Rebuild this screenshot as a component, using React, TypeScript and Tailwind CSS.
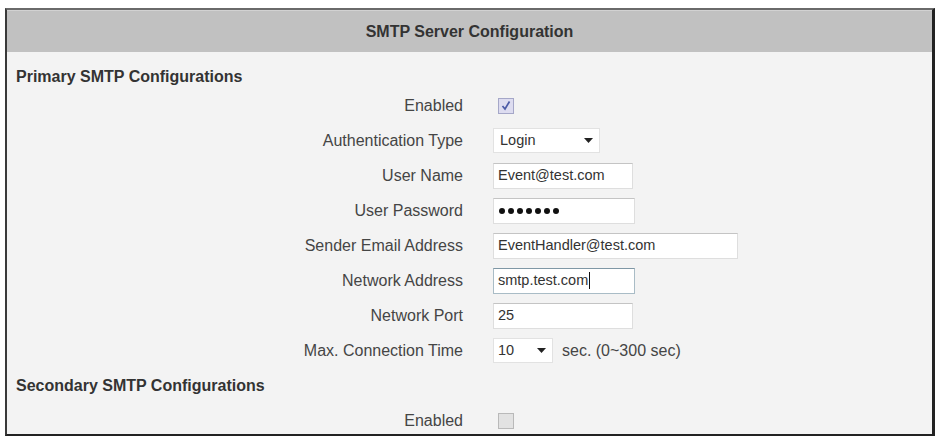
import React from "react";

const font = { fontFamily: '"Liberation Sans", Arial, sans-serif' };

function Row({ label, children }: { label: string; children?: React.ReactNode }) {
  return (
    <div className="flex h-[35px] shrink-0 items-center">
      <div className="w-[456px] shrink-0 pr-0 text-right text-[16px] leading-[18px] text-[#454545]">{label}</div>
      <div className="ml-[30px] flex items-center">{children}</div>
    </div>
  );
}

function TextBox({ w, children, focused }: { w: string; children?: React.ReactNode; focused?: boolean }) {
  return (
    <div
      className={
        "flex h-[26px] items-center border bg-white pl-[4px] text-[14.5px] text-[#333] " +
        w +
        (focused ? " border-[#a9bcc6] border-t-[#7f97a5]" : " border-[#dedede] border-t-[#c4c4c4]")
      }
    >
      {children}
    </div>
  );
}

function Caret() {
  return (
    <svg width="9" height="5" viewBox="0 0 9 5" className="shrink-0">
      <path d="M0 0 H9 L4.5 5 Z" fill="#222" />
    </svg>
  );
}

function Check({ checked }: { checked?: boolean }) {
  return checked ? (
    <div className="ml-[5px] flex h-[16px] w-[16px] items-center justify-center border border-[#a5a7c8] bg-[#dddcf0]">
      <svg width="12" height="11" viewBox="0 0 12 11">
        <path d="M2.5 6 L5 9 L9.5 1.5" fill="none" stroke="#4b5aa6" strokeWidth="1.7" />
      </svg>
    </div>
  ) : (
    <div className="ml-[5px] h-[16px] w-[16px] border border-[#b9b9b9] bg-[#e2e2e2]" />
  );
}

export default function App() {
  return (
    <div className="h-[437px] w-[937px] bg-white pl-[5px] pt-[8px]" style={font}>
      <div className="flex h-[428px] w-[930px] flex-col overflow-hidden border-b-2 border-l-2 border-r-[3px] border-t-2 border-b-[#222] border-l-[#3a3a3a] border-r-[#222] border-t-[#6a6a6a] bg-[#f3f3f3]">
        <div className="flex h-[42px] shrink-0 items-center justify-center border-t border-t-[#d2d2d2] bg-[#c1c1c1] text-[16px] font-bold text-[#333]">
          SMTP Server Configuration
        </div>
        <div className="flex h-[36px] shrink-0 items-center pl-[9px] pt-[14px] text-[16px] font-bold leading-[18px] text-[#333]">
          Primary SMTP Configurations
        </div>
        <Row label="Enabled">
          <Check checked />
        </Row>
        <Row label="Authentication Type">
          <div className="flex h-[25px] w-[107px] items-center justify-between border border-[#e2e2e2] bg-white pl-[6px] pr-[6px] text-[14.5px] text-[#333]">
            <span>Login</span>
            <Caret />
          </div>
        </Row>
        <Row label="User Name">
          <TextBox w="w-[140px]">Event@test.com</TextBox>
        </Row>
        <Row label="User Password">
          <TextBox w="w-[142px]">
            <div className="flex gap-[3px] pl-[1px]">
              {[0, 1, 2, 3, 4, 5, 6].map((i) => (
                <span key={i} className="h-[6px] w-[6px] rounded-full bg-[#111]" />
              ))}
            </div>
          </TextBox>
        </Row>
        <Row label="Sender Email Address">
          <TextBox w="w-[245px]">EventHandler@test.com</TextBox>
        </Row>
        <Row label="Network Address">
          <TextBox w="w-[142px]" focused>
            <span>smtp.test.com</span>
            <span className="ml-[1px] h-[17px] w-[1px] bg-[#111]" />
          </TextBox>
        </Row>
        <Row label="Network Port">
          <TextBox w="w-[140px]">25</TextBox>
        </Row>
        <Row label="Max. Connection Time">
          <div className="flex h-[25px] w-[60px] items-center justify-between border border-[#e2e2e2] bg-white pl-[4px] pr-[6px] text-[14.5px] text-[#333]">
            <span>10</span>
            <Caret />
          </div>
          <span className="ml-[9px] text-[16px] leading-[18px] text-[#454545]">sec. (0~300 sec)</span>
        </Row>
        <div className="flex h-[35px] shrink-0 items-center pl-[9px] text-[16px] font-bold leading-[18px] text-[#333]">
          Secondary SMTP Configurations
        </div>
        <Row label="Enabled">
          <Check />
        </Row>
      </div>
    </div>
  );
}
